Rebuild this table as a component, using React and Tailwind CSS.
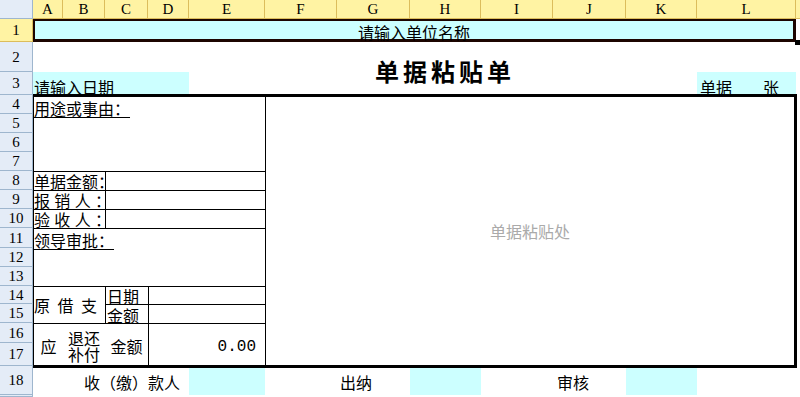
import clsx from "clsx";

const COLS = [
  { l: "A", cls: "col-start-2" },
  { l: "B", cls: "col-start-3" },
  { l: "C", cls: "col-start-4" },
  { l: "D", cls: "col-start-5" },
  { l: "E", cls: "col-start-6" },
  { l: "F", cls: "col-start-7" },
  { l: "G", cls: "col-start-8" },
  { l: "H", cls: "col-start-9" },
  { l: "I", cls: "col-start-10" },
  { l: "J", cls: "col-start-11" },
  { l: "K", cls: "col-start-12" },
  { l: "L", cls: "col-start-13" },
];

const ROWS = [
  { n: "1", cls: "row-start-2", sel: true },
  { n: "2", cls: "row-start-3" },
  { n: "3", cls: "row-start-4" },
  { n: "4", cls: "row-start-5" },
  { n: "5", cls: "row-start-6" },
  { n: "6", cls: "row-start-7" },
  { n: "7", cls: "row-start-8" },
  { n: "8", cls: "row-start-9" },
  { n: "9", cls: "row-start-10" },
  { n: "10", cls: "row-start-11" },
  { n: "11", cls: "row-start-12" },
  { n: "12", cls: "row-start-13" },
  { n: "13", cls: "row-start-14" },
  { n: "14", cls: "row-start-15" },
  { n: "15", cls: "row-start-16" },
  { n: "16", cls: "row-start-17" },
  { n: "17", cls: "row-start-18" },
  { n: "18", cls: "row-start-19" },
  { n: "", cls: "row-start-20" },
];

// 报 销 人： style labels, spread over the A:B cell
const Spread = ({ chars, className }) => (
  <div className={clsx("flex items-end justify-between whitespace-nowrap", className)}>
    {chars.map((c, i) => (
      <span key={i} className={i === chars.length - 1 ? "w-[10px]" : ""}>
        {c}
      </span>
    ))}
  </div>
);

export default function App() {
  return (
    <div className="grid h-[397px] w-[800px] grid-cols-[33px_30px_42px_43px_41px_76px_72px_73px_71px_72px_73px_71px_99px_1fr] grid-rows-[19px_23px_30px_23px_19px_19px_19px_19px_19px_19px_19px_20px_19px_19px_18px_19px_20px_23px_29px_1fr] overflow-hidden bg-white font-['Noto_Sans_CJK_SC',sans-serif] text-[16px] leading-none text-black">
      {/* corner + column headers */}
      <div className="col-start-1 row-start-1 border-r border-b border-[#9eb6ce] bg-[#e4ecf7]" />
      {COLS.map((c) => (
        <div
          key={c.l}
          className={clsx(
            c.cls,
            "row-start-1 flex items-center justify-center border-r border-b border-[#dcbd5c] bg-[#fff3a3] pt-px font-['Liberation_Serif',serif] text-[15px]"
          )}
        >
          {c.l}
        </div>
      ))}
      <div className="col-start-14 row-start-1 border-b border-[#dcbd5c] bg-[#fff3a3]" />

      {/* row headers */}
      {ROWS.map((r) => (
        <div
          key={r.cls}
          className={clsx(
            r.cls,
            "col-start-1 flex items-center justify-center border-r border-b pt-px font-['Liberation_Serif',serif] text-[15px]",
            r.sel ? "border-[#dcbd5c] bg-[#fff3a3]" : "border-[#9eb6ce] bg-[#e4ecf7]"
          )}
        >
          {r.n}
        </div>
      ))}

      {/* row 1 - selected */}
      <div className="relative col-start-2 col-end-14 row-start-2 flex items-center justify-center border-t-2 border-r-[3px] border-b-[3px] border-l-2 border-[#1c0500] bg-[#ccffff] pt-[4px]">
        请输入单位名称
        <div className="absolute -right-[7px] -bottom-[6px] h-[5px] w-[5px] bg-black" />
      </div>

      {/* title */}
      <div className="col-start-6 col-end-13 row-start-3 row-end-5 flex items-center justify-center pt-[4px] pl-[4px] text-[24px] font-bold tracking-[4px]">
        单据粘贴单
      </div>

      {/* row 3 */}
      <div className="col-start-2 col-end-6 row-start-4 flex items-end bg-[#ccffff] pl-px">
        <span>请输入日期</span>
      </div>
      <div className="col-start-13 row-start-4 flex items-end justify-between bg-[#ccffff] pr-[17px] pl-[3px]">
        <span>单据</span>
        <span>张</span>
      </div>

      {/* main frame rows 4-17 */}
      <div className="z-10 col-start-2 col-end-15 row-start-5 row-end-19 mr-[3px] -mt-px -mb-[2px] flex border-t-[3px] border-r-[3px] border-b-[3px] border-l border-black bg-white">
        <div className="grid w-[232px] shrink-0 grid-cols-[29px_42px_43px_1fr] grid-rows-[74px_19px_19px_19px_58px_18px_19px_1fr] border-r border-black">
          <div className="col-span-4 pt-[3px]">
            <span className="underline underline-offset-[2px]">用途或事由：</span>
          </div>

          <div className="col-span-2 flex items-end border-t border-black pb-px whitespace-nowrap">
            单据金额：
          </div>
          <div className="col-span-2 border-t border-l border-black" />

          <Spread chars={["报", "销", "人", "："]} className="col-span-2 border-t border-black pb-px" />
          <div className="col-span-2 border-t border-l border-black" />

          <Spread chars={["验", "收", "人", "："]} className="col-span-2 border-t border-black pb-px" />
          <div className="col-span-2 border-t border-l border-black" />

          <div className="col-span-4 border-t border-black pt-[3px]">
            <span className="underline underline-offset-[2px]">领导审批：</span>
          </div>

          <div className="col-span-2 row-span-2 flex items-center justify-between border-t border-black pr-[8px]">
            <span>原</span>
            <span>借</span>
            <span>支</span>
          </div>
          <div className="flex items-end border-t border-l border-black pl-px">日期</div>
          <div className="border-t border-l border-black" />
          <div className="flex items-end border-t border-l border-black pl-px">金额</div>
          <div className="border-t border-l border-black" />

          <div className="flex items-center justify-center border-t border-black pt-[2px]">应</div>
          <div className="flex flex-col items-center justify-center border-t border-black pt-[2px]">
            <span>退还</span>
            <span>补付</span>
          </div>
          <div className="flex items-center justify-center border-t border-black pt-[2px]">金额</div>
          <div className="flex items-center justify-end border-t border-l border-black pt-[4px] pr-[9px] font-['Liberation_Mono',monospace] text-[16px]">
            0.00
          </div>
        </div>
        <div className="flex flex-1 items-center justify-center text-[#aaaaaa]">单据粘贴处</div>
      </div>

      {/* row 18 */}
      <div className="col-start-2 col-end-6 row-start-19 flex items-center justify-end pt-[3px] pr-[9px]">
        收（缴）款人
      </div>
      <div className="col-start-6 row-start-19 bg-[#ccffff]" />
      <div className="col-start-8 row-start-19 flex items-center pt-[3px] pl-[3px]">出纳</div>
      <div className="col-start-9 row-start-19 bg-[#ccffff]" />
      <div className="col-start-11 row-start-19 flex items-center pt-[3px] pl-[4px]">审核</div>
      <div className="col-start-12 row-start-19 bg-[#ccffff]" />
    </div>
  );
}
